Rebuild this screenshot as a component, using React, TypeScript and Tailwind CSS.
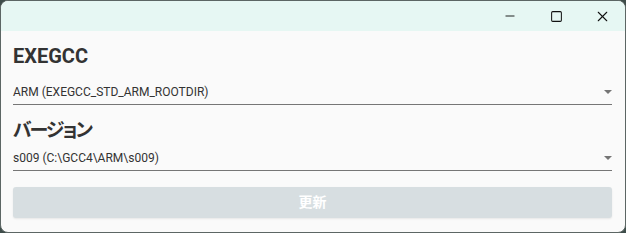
import { Minus, Square, X } from 'lucide-react'

const latin = { fontFamily: 'Roboto, "Noto Sans CJK JP", sans-serif' }
const jp = { fontFamily: 'Roboto, "Noto Sans CJK JP", sans-serif', fontFeatureSettings: '"palt"' }

function Field({ value }: { value: string }) {
  return (
    <div className="flex items-center h-[26px] border-b border-[#767676] mr-[1px]">
      <span className="flex-1 text-[12px] text-[#333]" style={latin}>{value}</span>
      <svg width="8" height="4" viewBox="0 0 8 4">
        <path d="M0 0h8L4 4z" fill="#757575" />
      </svg>
    </div>
  )
}

export default function App() {
  return (
    <div className="w-[626px] h-[233px] bg-[#3e4d4a]">
      <div className="w-full h-full rounded-[8px] border border-[#5c6664] bg-[#fafafa] overflow-hidden flex flex-col">
        {/* title bar */}
        <div className="h-[30px] bg-[#e6f7f3] flex justify-end items-center">
          <div className="w-[46px] h-full flex items-center justify-center">
            <Minus className="w-[14px] h-[14px] text-[#111]" strokeWidth={1.6} />
          </div>
          <div className="w-[46px] h-full flex items-center justify-center">
            <Square className="w-[13px] h-[13px] text-[#111]" strokeWidth={1.9} />
          </div>
          <div className="w-[46px] h-full flex items-center justify-center">
            <X className="w-[17px] h-[17px] text-[#111]" strokeWidth={1.5} />
          </div>
        </div>

        <div className="flex-1 px-[12px] pt-[12px]">
          <h1 className="text-[20px] leading-[26px] font-bold text-[#333]" style={latin}>EXEGCC</h1>
          <div className="mt-[10px]">
            <Field value="ARM (EXEGCC_STD_ARM_ROOTDIR)" />
          </div>
          <h2 className="mt-[12px] text-[19px] leading-[28px] tracking-[-2px] font-bold text-[#333]" style={jp}>バージョン</h2>
          <Field value="s009 (C:\GCC4\ARM\s009)" />
          <button
            disabled
            className="mt-[16px] w-[599px] h-[31px] rounded-[3px] bg-[#d7dee1] text-white text-[14px] font-bold shadow-[0_1px_2px_rgba(0,0,0,0.08)]"
            style={jp}
          >
            更新
          </button>
        </div>
      </div>
    </div>
  )
}
